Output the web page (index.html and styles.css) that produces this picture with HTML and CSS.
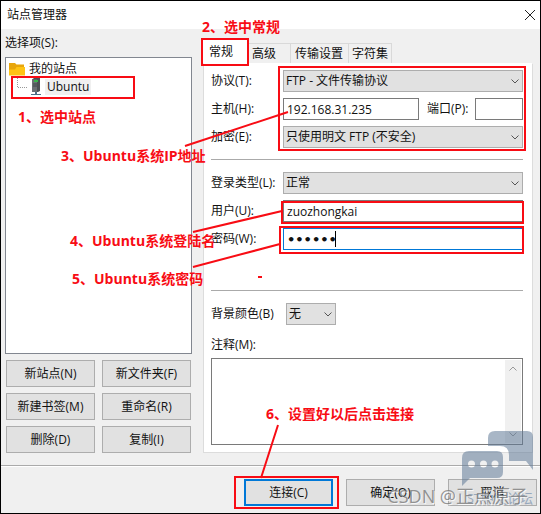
FILE: index.html
```html
<!DOCTYPE html>
<html lang="zh-CN">
<head>
<meta charset="utf-8">
<meta name="viewport" content="width=device-width, initial-scale=1">
<title>站点管理器</title>
<link rel="stylesheet" href="styles.css">
</head>
<body>
<main class="window">
  <header class="titlebar">
    <h1>站点管理器</h1>
    <button class="close" type="button" aria-label="关闭"><svg width="12" height="12" viewBox="0 0 12 12"><path d="M1 1 11 11M11 1 1 11"/></svg></button>
  </header>

  <div class="content">
    <section class="sites">
      <h2 class="sites-label">选择项(S):</h2>
      <ul class="tree">
        <li>
          <div class="node">
            <svg width="16" height="14" viewBox="0 0 16 14"><path d="M0 13V1h6l1.500 1.500H15V8H0z" fill="#e8a60c"/><path d="M0 13.500V8l1-.5h5L7.500 5H16v8.500z" fill="#ffc414"/></svg>
            <span>我的站点</span>
          </div>
          <ul>
            <li class="node child">
              <svg width="24" height="18" viewBox="0 0 24 18"><path d="M.5 0V9.500H11" fill="none" stroke="#999" stroke-dasharray="1 1"/><path d="M15 1.500 17 0h6v13l-2 1h-6z" fill="#4c5054"/><path d="M15 1.500h5V14h-5z" fill="#6b7074"/><path d="M17 2h4v2h-4z" fill="#38b54a"/><path d="M16 6h4M16 8h4" stroke="#41464a"/><path d="M18 14h2v2h4v1H14v-1h4z" fill="#4d6f86"/></svg>
              <span class="selected">Ubuntu</span>
            </li>
          </ul>
        </li>
      </ul>
      <div class="site-actions">
        <button class="btn" type="button">新站点(N)</button>
        <button class="btn" type="button">新文件夹(F)</button>
        <button class="btn" type="button">新建书签(M)</button>
        <button class="btn" type="button">重命名(R)</button>
        <button class="btn" type="button">删除(D)</button>
        <button class="btn" type="button">复制(I)</button>
      </div>
    </section>

    <section class="settings">
      <div class="tabs" role="tablist">
        <button class="tab active" type="button" role="tab" aria-selected="true">常规</button>
        <button class="tab" type="button" role="tab">高级</button>
        <button class="tab wide" type="button" role="tab">传输设置</button>
        <button class="tab" type="button" role="tab">字符集</button>
      </div>
      <form class="panel">
        <div class="row">
          <label for="protocol">协议(T):</label>
          <div class="select"><select id="protocol"><option>FTP - 文件传输协议</option></select><svg class="chevron" viewBox="0 0 8 5"><path d="M.5.5 4 4 7.500.5"/></svg></div>
        </div>
        <div class="row">
          <label for="host">主机(H):</label>
          <input class="field" id="host" type="text" value="192.168.31.235">
          <label class="port-label" for="port">端口(P):</label>
          <input class="field port" id="port" type="text">
        </div>
        <div class="row">
          <label for="encryption">加密(E):</label>
          <div class="select"><select id="encryption"><option>只使用明文 FTP (不安全)</option></select><svg class="chevron" viewBox="0 0 8 5"><path d="M.5.5 4 4 7.500.5"/></svg></div>
        </div>
        <hr class="rule">
        <div class="row">
          <label for="logon">登录类型(L):</label>
          <div class="select"><select id="logon"><option>正常</option></select><svg class="chevron" viewBox="0 0 8 5"><path d="M.5.5 4 4 7.500.5"/></svg></div>
        </div>
        <div class="row">
          <label for="user">用户(U):</label>
          <input class="field" id="user" type="text" value="zuozhongkai">
        </div>
        <div class="row">
          <label for="password">密码(W):</label>
          <div class="secret"><input class="field focused" id="password" type="password" value="123456"><i class="caret"></i></div>
        </div>
        <hr class="rule far">
        <div class="row">
          <label for="color">背景颜色(B)</label>
          <div class="select small"><select id="color"><option>无</option></select><svg class="chevron" viewBox="0 0 8 5"><path d="M.5.5 4 4 7.500.5"/></svg></div>
        </div>
        <label class="notes-label" for="notes">注释(M):</label>
        <div class="notes">
          <textarea id="notes"></textarea>
          <div class="scrollbar">
            <svg class="chevron" viewBox="0 0 8 5"><path d="M.5 4.500 4 1 7.500 4.500"/></svg>
            <svg class="chevron" viewBox="0 0 8 5"><path d="M.5.5 4 4 7.500.5"/></svg>
          </div>
        </div>
      </form>
    </section>
  </div>

  <footer class="footer">
    <button class="btn primary" type="button">连接(C)</button>
    <button class="btn" type="button">确定(O)</button>
    <button class="btn" type="button">取消</button>
  </footer>

  <div class="watermark">
    <svg width="72" height="56" viewBox="0 0 72 56"><path d="M33 0H65Q71 0 71 6V39L64 30H47V24Q47 15 38 15H26V7Q26 0 33 0Z"/><path fill-rule="evenodd" d="M7 20H35Q41 20 41 26V41Q41 47 35 47H8L0 55V27Q0 20 7 20ZM9.500 29.500a3.500 3.500 0 1 0 0 7 3.500 3.500 0 0 0 0-7ZM21.500 29.500a3.500 3.500 0 1 0 0 7 3.500 3.500 0 0 0 0-7ZM33 29.500a3.500 3.500 0 1 0 0 7 3.500 3.500 0 0 0 0-7Z"/></svg>
    <span class="forum">ST中文论坛</span>
    <span class="credit">CSDN @正点原子</span>
  </div>

  <svg class="marks" width="541" height="514" viewBox="0 0 541 514">
    <rect x="12" y="77" width="122" height="21"/>
    <rect x="202" y="39" width="46" height="26"/>
    <rect x="279" y="67" width="246" height="83"/>
    <rect x="282" y="202" width="241" height="21"/>
    <rect x="280" y="227" width="243" height="26"/>
    <rect x="235" y="477" width="103" height="31"/>
    <path d="M185 146 288 112M193 232 282 211M193 267 280 244M278 425 261 478M258 277h4"/>
  </svg>
  <p class="note n1">1、选中站点</p>
  <p class="note n2">2、选中常规</p>
  <p class="note n3">3、Ubuntu系统IP地址</p>
  <p class="note n4">4、Ubuntu系统登陆名</p>
  <p class="note n5">5、Ubuntu系统密码</p>
  <p class="note n6">6、设置好以后点击连接</p>
</main>
</body>
</html>
```
FILE: styles.css
```css
* { box-sizing: border-box; }

body {
  margin: 0;
  background: #fff;
  color: #111;
  font: 12px/16px "Open Sans", "Noto Sans CJK SC", sans-serif;
}

button, input, select, textarea { font: inherit; color: inherit; }
h1, h2, p, ul { margin: 0; padding: 0; font-size: inherit; font-weight: inherit; list-style: none; }
svg { flex: none; }

.window {
  position: relative;
  display: flex;
  flex-direction: column;
  border: 1px solid #000;
  background: #f0f0f0;
  overflow: hidden;
}

.titlebar {
  display: flex;
  align-items: center;
  justify-content: space-between;
  height: 28px;
  padding: 0 4px 0 6px;
  background: #fff;
}
.close { display: flex; padding: 0; border: 0; background: none; }
.close path { fill: none; stroke: #222; }

.content { display: flex; gap: 11px; padding: 6px 7px 12px 4px; border-bottom: 1px solid #aaa; }

.sites { display: flex; flex-direction: column; width: 187px; flex: none; }
.sites-label { height: 22px; }
.tree {
  flex: 1;
  padding: 2px 3px;
  border: 1px solid #828790;
  background: #fff;
}
.node { display: flex; align-items: center; gap: 4px; height: 18px; }
.child { padding-left: 8px; }
.selected { padding: 0 2px; background: #f0f0f0; }
.site-actions {
  display: grid;
  grid-template-columns: 1fr 1fr;
  gap: 6px 7px;
  padding: 6px 1px 0;
}

.btn {
  height: 27px;
  padding: 0;
  border: 1px solid #adadad;
  background: #e1e1e1;
}

.settings { display: flex; flex-direction: column; flex: 1; min-width: 0; padding-top: 4px; }
.tabs { display: flex; align-items: flex-end; height: 24px; }
.tab {
  height: 20px;
  padding: 0 3px;
  min-width: 42px;
  border: 1px solid #d9d9d9;
  border-width: 1px 1px 0 0;
  background: #f0f0f0;
  text-align: left;
}
.tab.wide { width: 58px; padding: 0 4px; }
.tab.active { width: 46px; height: 24px; padding: 0 6px; background: #fff; }
.panel {
  flex: 1;
  padding: 6px 9px 7px 7px;
  border: 1px solid #dcdcdc;
  border-top-color: #fff;
  background: #fff;
}
.row { display: flex; align-items: center; height: 22px; margin-bottom: 6px; }
.row > label { width: 72px; flex: none; white-space: nowrap; }
.row > .port-label { width: 56px; padding-left: 8px; }
.field {
  flex: 1;
  width: 100%;
  min-width: 0;
  height: 22px;
  padding: 0 3px;
  border: 1px solid #7a7a7a;
  border-radius: 0;
  background: #fff;
  outline: 0;
}
.port { flex: none; width: 48px; }
.select, .secret { position: relative; flex: 1; }
.select select {
  display: block;
  appearance: none;
  width: 100%;
  height: 22px;
  padding: 0 2px;
  border: 1px solid #adadad;
  border-radius: 0;
  background: #e1e1e1;
}
.select.small { flex: none; width: 50px; margin-left: 3px; }
.chevron { width: 8px; height: 5px; }
.chevron path { fill: none; stroke: #555; }
.select .chevron { position: absolute; right: 4px; top: 9px; }
.focused { display: block; border-color: #0078d7; font: 700 13px/16px "DejaVu Sans", sans-serif; }
.caret { position: absolute; left: 52px; top: 3px; width: 1px; height: 16px; background: #000; }
.rule { height: 1px; margin: 11px 0 12px; border: 0; background: #aaa; }
.rule.far { margin: 40px 0 12px; }
.notes-label { display: block; margin: 12px 0 5px; }
.notes { display: flex; height: 87px; padding: 1px; border: 1px solid #7a7a7a; }
.notes textarea { flex: 1; min-width: 0; border: 0; padding: 2px; resize: none; outline: 0; background: #fff; }
.scrollbar {
  display: flex;
  flex-direction: column;
  align-items: center;
  justify-content: space-between;
  width: 16px;
  padding: 6px 0;
  background: #f0f0f0;
}
.scrollbar path { stroke: #999; }

.footer {
  display: flex;
  justify-content: flex-end;
  gap: 13px;
  padding: 12px 3px 7px;
  border-top: 1px solid #fff;
}
.footer .btn { width: 89px; }
.footer .primary { border: 2px solid #0078d7; }

.watermark { position: absolute; right: 6px; bottom: 26px; width: 72px; height: 56px; }
.watermark path { fill: #607a98; fill-opacity: .55; }
.forum, .credit { position: absolute; white-space: nowrap; }
.forum { right: 1px; top: 59px; color: #7890ad; opacity: .7; font-size: 13px; }
.credit {
  right: 6px;
  top: 53px;
  color: #777;
  opacity: .75;
  font-size: 18px;
  line-height: 24px;
  text-shadow: 1px 1px 0 #fff;
}

.marks { position: absolute; left: -1px; top: -1px; pointer-events: none; }
.marks rect, .marks path { fill: none; stroke: #f80c14; stroke-width: 2; }
.note {
  position: absolute;
  color: #f80c14;
  font-size: 14px;
  font-weight: 700;
  line-height: 20px;
  white-space: nowrap;
}
.n1 { left: 17px; top: 106px; }
.n2 { left: 201px; top: 16px; }
.n3 { left: 60px; top: 145px; }
.n4 { left: 69px; top: 230px; }
.n5 { left: 71px; top: 268px; }
.n6 { left: 265px; top: 403px; }
```
